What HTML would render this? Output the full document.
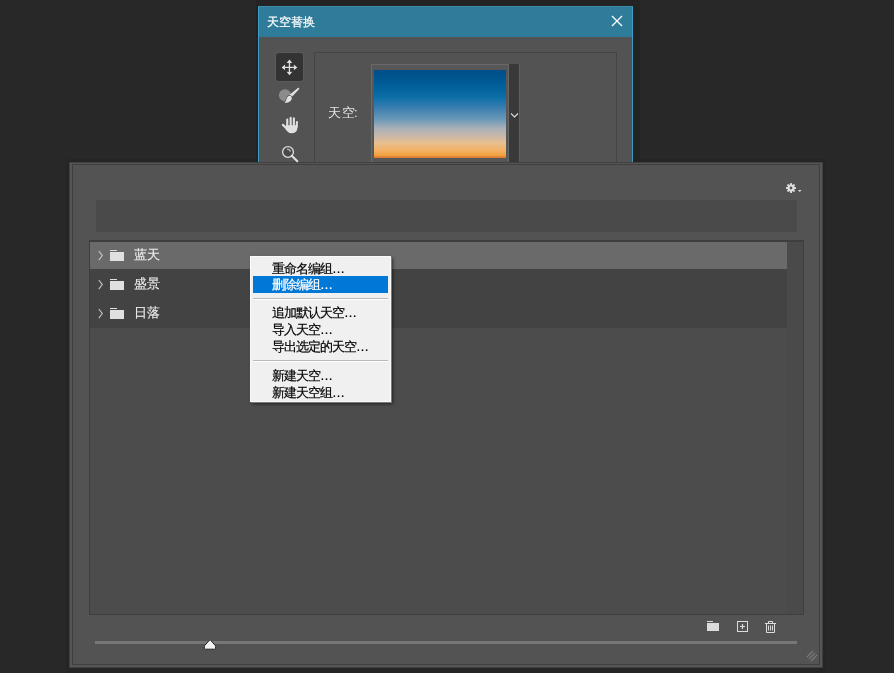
<!DOCTYPE html>
<html><head><meta charset="utf-8">
<style>
*{margin:0;padding:0;box-sizing:border-box;}
html,body{width:894px;height:673px;overflow:hidden;background:#282828;font-family:"Liberation Sans",sans-serif;}
.a{position:absolute;}
.t{will-change:transform;white-space:nowrap;}
.m{-webkit-text-stroke:0.2px currentColor;font-size:13px !important;letter-spacing:-1px;}
</style></head>
<body>
<!-- small dialog -->
<div class="a" style="left:66px;top:159px;width:760px;height:514px;background:#252525;"></div>
<div class="a" style="left:256px;top:0px;width:384px;height:170px;background:#232323;"></div>
<div class="a" style="left:258px;top:6px;width:375px;height:160px;background:#535353;border-left:1px solid #3d9bc5;border-right:1px solid #3d9bc5;"></div>
<div class="a" style="left:258px;top:6px;width:375px;height:31px;background:#2e7b9a;border:1px solid #3f9cc4;border-bottom:0;border-top-color:#3a8aab;"></div>
<div class="a t" style="-webkit-text-stroke:0.2px #fff;left:267px;top:14px;font-size:12px;line-height:16px;color:#fff;">天空替换</div>
<svg class="a" style="left:610px;top:14px" width="14" height="14" viewBox="0 0 14 14"><path d="M2 2L12 12M12 2L2 12" stroke="#fff" stroke-width="1.3"/></svg>
<div class="a" style="left:276px;top:53px;width:27px;height:28px;background:#333;border-radius:3px;box-shadow:0 0 0 1px #5a5a5a;"></div>
<!-- inner panel -->
<div class="a" style="left:314px;top:52px;width:303px;height:120px;border:1px solid #444;"></div>
<div class="a t" style="left:328px;top:105px;font-size:13px;line-height:16px;letter-spacing:1px;color:#e6e6e6;">天<span style="letter-spacing:-1px">空</span>:</div>
<div class="a" style="left:371px;top:64px;width:138px;height:100px;background:#575757;border-top:1px solid #6a6a6a;border-left:1px solid #6a6a6a;border-right:1px solid #666;"></div>
<div class="a" style="left:374px;top:70px;width:132px;height:88px;background:linear-gradient(#004e89 0%,#00508a 3%,#00609a 19%,#0f70a8 32%,#3e80b0 44%,#6a98b8 56%,#a8b0b8 66%,#c8b8a8 75%,#e8c090 83%,#f5b060 92%,#f0a040 97%,#d87030 100%);"></div>
<div class="a" style="left:509px;top:64px;width:11px;height:100px;background:#393939;border-right:1px solid #5e5e5e;"></div>
<svg class="a" style="left:510px;top:112px" width="9" height="7" viewBox="0 0 9 7"><path d="M1 1.5L4.5 5L8 1.5" stroke="#ddd" stroke-width="1.1" fill="none"/></svg>

<!-- big panel -->
<div class="a" style="left:69px;top:162px;width:754px;height:506px;background:#404040;"></div>
<div class="a" style="left:70px;top:163px;width:752px;height:504px;background:#555;"></div>
<div class="a" style="left:72px;top:164px;width:748px;height:501px;background:#3f3f3f;"></div>
<div class="a" style="left:73px;top:165px;width:746px;height:499px;background:#535353;"></div>
<div class="a" style="left:96px;top:200px;width:701px;height:32px;background:#4a4a4a;"></div>
<!-- list -->
<div class="a" style="left:89px;top:240px;width:715px;height:375px;background:#3e3e3e;"></div>
<div class="a" style="left:90px;top:242px;width:713px;height:372px;background:#4c4c4c;"></div>
<div class="a" style="left:787px;top:242px;width:16px;height:372px;background:#4a4a4a;"></div>
<div class="a" style="left:90px;top:242px;width:697px;height:27px;background:#6a6a6a;"></div>
<div class="a" style="left:90px;top:269px;width:697px;height:28px;background:#434343;"></div>
<div class="a" style="left:90px;top:297px;width:697px;height:31px;background:#434343;"></div>

<!-- slider -->
<div class="a" style="left:95px;top:641px;width:702px;height:3px;background:#777;"></div>

<!-- tool icons -->
<svg class="a" style="left:279px;top:57px" width="21" height="21" viewBox="0 0 21 21"><path d="M10.45 5.5V15.4M5.5 10.45H15.4" stroke="#e0e0e0" stroke-width="1.3"/><path d="M10.45 2.6L13.3 6.1L10.45 5.9L7.6 6.1Z M10.45 18.3L13.3 14.8L10.45 15.0L7.6 14.8Z M2.6 10.45L6.1 13.3L5.9 10.45L6.1 7.6Z M18.3 10.45L14.8 13.3L15.0 10.45L14.8 7.6Z" fill="#e0e0e0"/></svg>
<svg class="a" style="left:276px;top:84px" width="26" height="22" viewBox="0 0 26 22"><circle cx="9" cy="11.3" r="6.1" fill="#8c8c8c"/><path d="M23.0 3.8Q23.7 4.4 23.0 5.3L16.2 12.6L13.6 10.7L21.5 4.2Q22.3 3.5 23.0 3.8Z" fill="#e2e2e2"/><path d="M14.0 11.8C15.8 12.2 16.3 14.2 15.3 15.9C14.1 17.9 11.6 18.9 8.4 18.9C9.8 17.7 10.1 16.5 10.6 14.8C11.1 13 12.3 11.5 14.0 11.8Z" fill="#e2e2e2" stroke="#535353" stroke-width="1.3" paint-order="stroke"/></svg>
<svg class="a" style="left:278px;top:112px" width="24" height="24" viewBox="0 0 24 24"><g stroke="#e0e0e0" stroke-linecap="round" fill="none"><path d="M9.25 7.5V15" stroke-width="2.1"/><path d="M12.65 5.9V15" stroke-width="2.1"/><path d="M15.85 6.4V15" stroke-width="2.1"/><path d="M19.0 9.9L18.6 15" stroke-width="2.0"/><path d="M4.9 12.9L9 16.6" stroke-width="2.2"/></g><path d="M8.2 13.2H19.7L19.4 16.5Q18.6 21.2 13.8 21.2Q10.6 21.2 8.4 18.4L7.2 16.4Z" fill="#e0e0e0"/></svg>
<svg class="a" style="left:278px;top:142px" width="22" height="22" viewBox="0 0 22 22"><circle cx="10" cy="10" r="5.4" fill="#484848" stroke="#e0e0e0" stroke-width="1.3"/><path d="M13.8 13.8L19.3 19.3" stroke="#e0e0e0" stroke-width="2" stroke-linecap="round"/><path d="M9 7.3A2.8 2.8 0 0 1 12.4 9.6" fill="none" stroke="#bdbdbd" stroke-width="1.3"/></svg>

<!-- gear -->
<svg class="a" style="left:785px;top:182px" width="18" height="12" viewBox="0 0 18 12"><g fill="#e0e0e0"><circle cx="6" cy="6" r="3.5"/><rect x="5.05" y="1" width="1.9" height="10" rx="0.5"/><rect x="1" y="5.05" width="10" height="1.9" rx="0.5"/><rect x="5.05" y="1" width="1.9" height="10" rx="0.5" transform="rotate(45 6 6)"/><rect x="5.05" y="1" width="1.9" height="10" rx="0.5" transform="rotate(-45 6 6)"/></g><circle cx="6" cy="6" r="1.4" fill="#535353"/><path d="M13 8H16.5L14.75 10Z" fill="#e0e0e0"/></svg>

<!-- list rows -->
<svg class="a" style="left:97px;top:250px" width="7" height="12" viewBox="0 0 7 12"><path d="M1.8 1L5.3 5.6L1.8 10.2" stroke="#c4c4c4" stroke-width="1.1" fill="none"/></svg>
<svg class="a" style="left:97px;top:279px" width="7" height="12" viewBox="0 0 7 12"><path d="M1.8 1L5.3 5.6L1.8 10.2" stroke="#c4c4c4" stroke-width="1.1" fill="none"/></svg>
<svg class="a" style="left:97px;top:308px" width="7" height="12" viewBox="0 0 7 12"><path d="M1.8 1L5.3 5.6L1.8 10.2" stroke="#c4c4c4" stroke-width="1.1" fill="none"/></svg>
<svg class="a" style="left:109px;top:249px" width="16" height="12" viewBox="0 0 16 12"><rect x="1" y="1" width="7" height="1" fill="#e0e0e0"/><rect x="1" y="3" width="14" height="9" fill="#e0e0e0"/></svg>
<svg class="a" style="left:109px;top:278px" width="16" height="12" viewBox="0 0 16 12"><rect x="1" y="1" width="7" height="1" fill="#e0e0e0"/><rect x="1" y="3" width="14" height="9" fill="#e0e0e0"/></svg>
<svg class="a" style="left:109px;top:307px" width="16" height="12" viewBox="0 0 16 12"><rect x="1" y="1" width="7" height="1" fill="#e0e0e0"/><rect x="1" y="3" width="14" height="9" fill="#e0e0e0"/></svg>
<div class="a t" style="left:134px;top:247px;font-size:13px;line-height:16px;color:#ececec;-webkit-text-stroke:0.15px #ececec;">蓝天</div>
<div class="a t" style="left:134px;top:276px;font-size:13px;line-height:16px;color:#ececec;-webkit-text-stroke:0.15px #ececec;">盛景</div>
<div class="a t" style="left:134px;top:305px;font-size:13px;line-height:16px;color:#ececec;-webkit-text-stroke:0.15px #ececec;">日落</div>

<!-- bottom icons -->
<svg class="a" style="left:706px;top:620px" width="14" height="12" viewBox="0 0 14 12"><rect x="1" y="1" width="6" height="1" fill="#dcdcdc"/><rect x="1" y="3" width="12" height="8" fill="#dcdcdc"/></svg>
<svg class="a" style="left:736px;top:620px" width="13" height="13" viewBox="0 0 13 13"><rect x="1.5" y="1.5" width="10" height="10" fill="none" stroke="#dcdcdc" stroke-width="1"/><path d="M6.5 4V9M4 6.5H9" stroke="#dcdcdc" stroke-width="1.2"/></svg>
<svg class="a" style="left:764px;top:620px" width="13" height="14" viewBox="0 0 13 14"><path d="M1 3.5H12M4.5 3V1.5H8.5V3M2.5 3.5V12.5H10.5V3.5M4.5 5.5V10.5M6.5 5.5V10.5M8.5 5.5V10.5" fill="none" stroke="#dcdcdc" stroke-width="1"/></svg>
<!-- slider thumb -->
<svg class="a" style="left:203px;top:638px" width="14" height="13" viewBox="0 0 14 13"><path d="M7 1.6L12.2 7.4Q12.6 7.9 12.6 8.5V10.3Q12.6 11.2 11.7 11.2H2.3Q1.4 11.2 1.4 10.3V8.5Q1.4 7.9 1.8 7.4Z" fill="#f2f2f2" stroke="#222" stroke-width="1" stroke-linejoin="round"/></svg>
<!-- resize grip -->
<svg class="a" style="left:805px;top:649px" width="14" height="14" viewBox="0 0 14 14"><path d="M2 8L8 2M4 10L10 4M6 12L12 6" stroke="#7a7a7a" stroke-width="1.2"/></svg>

<!-- context menu -->
<div class="a" style="left:250px;top:256px;width:141px;height:146px;background:#f0f0f0;border:1px solid #fafafa;box-shadow:1px 1px 0 #7a7a7a,2px 2px 3px rgba(0,0,0,0.55);"></div>
<div class="a" style="left:253px;top:276px;width:135px;height:17px;background:#0078d7;"></div>
<div class="a" style="left:253px;top:298px;width:135px;height:1px;background:#b9b9b9;border-bottom:0;"></div><div class="a" style="left:253px;top:299px;width:135px;height:1px;background:#fff;"></div>
<div class="a" style="left:253px;top:360px;width:135px;height:1px;background:#b9b9b9;"></div><div class="a" style="left:253px;top:361px;width:135px;height:1px;background:#fff;"></div>
<div class="a t m" style="left:272px;top:260px;font-size:12px;line-height:17px;color:#000;white-space:nowrap;">重命名编组…</div>
<div class="a t m" style="left:272px;top:276px;font-size:12px;line-height:17px;color:#fff;white-space:nowrap;">删除编组…</div>
<div class="a t m" style="left:272px;top:304px;font-size:12px;line-height:17px;color:#000;white-space:nowrap;">追加默认天空…</div>
<div class="a t m" style="left:272px;top:321px;font-size:12px;line-height:17px;color:#000;white-space:nowrap;">导入天空…</div>
<div class="a t m" style="left:272px;top:338px;font-size:12px;line-height:17px;color:#000;white-space:nowrap;">导出选定的天空…</div>
<div class="a t m" style="left:272px;top:367px;font-size:12px;line-height:17px;color:#000;white-space:nowrap;">新建天空…</div>
<div class="a t m" style="left:272px;top:384px;font-size:12px;line-height:17px;color:#000;white-space:nowrap;">新建天空组…</div>
</body></html>
